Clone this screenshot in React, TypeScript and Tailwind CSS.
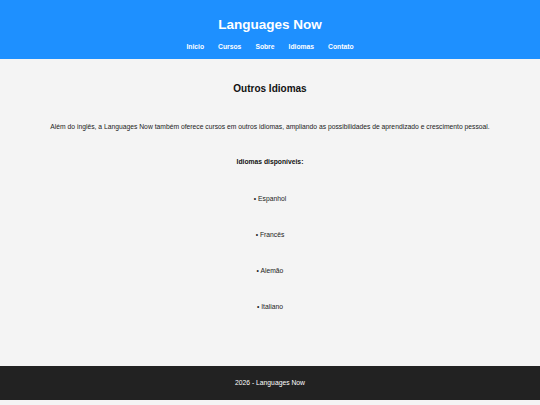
import React from "react";

export default function App() {
  const items = ["Espanhol", "Francês", "Alemão", "Italiano"];
  return (
    <div className="min-h-screen bg-[#f4f4f4] text-[#222] font-['Liberation_Sans',Arial,sans-serif]">
      <header className="bg-[#1e90ff] text-white h-[59px] pt-[16px] flex flex-col items-center">
        <h1 className="text-[13.5px] leading-[18px] font-bold">Languages Now</h1>
        <nav className="mt-[7.5px] flex gap-[14px] text-[6.75px] leading-[9px] font-bold">
          <a>Inicio</a>
          <a>Cursos</a>
          <a>Sobre</a>
          <a>Idiomas</a>
          <a>Contato</a>
        </nav>
      </header>
      <main className="flex flex-col items-center text-center pt-[24px] h-[307px]">
        <h2 className="text-[10px] leading-[12px] font-bold text-[#111]">Outros Idiomas</h2>
        <p className="mt-[26.5px] text-[6.75px] leading-[9px]">
          Além do inglês, a Languages Now também oferece cursos em outros idiomas, ampliando as possibilidades de aprendizado e crescimento pessoal.
        </p>
        <p className="mt-[26px] text-[6.75px] leading-[9px] font-bold text-[#111]">Idiomas disponíveis:</p>
        <ul className="mt-[28px] flex flex-col gap-[27px] text-[6.75px] leading-[9px]">
          {items.map((i) => (
            <li key={i}>• {i}</li>
          ))}
        </ul>
      </main>
      <footer className="bg-[#222] text-white h-[34px] flex items-center justify-center text-[6.75px]">
        2026 - Languages Now
      </footer>
    </div>
  );
}
